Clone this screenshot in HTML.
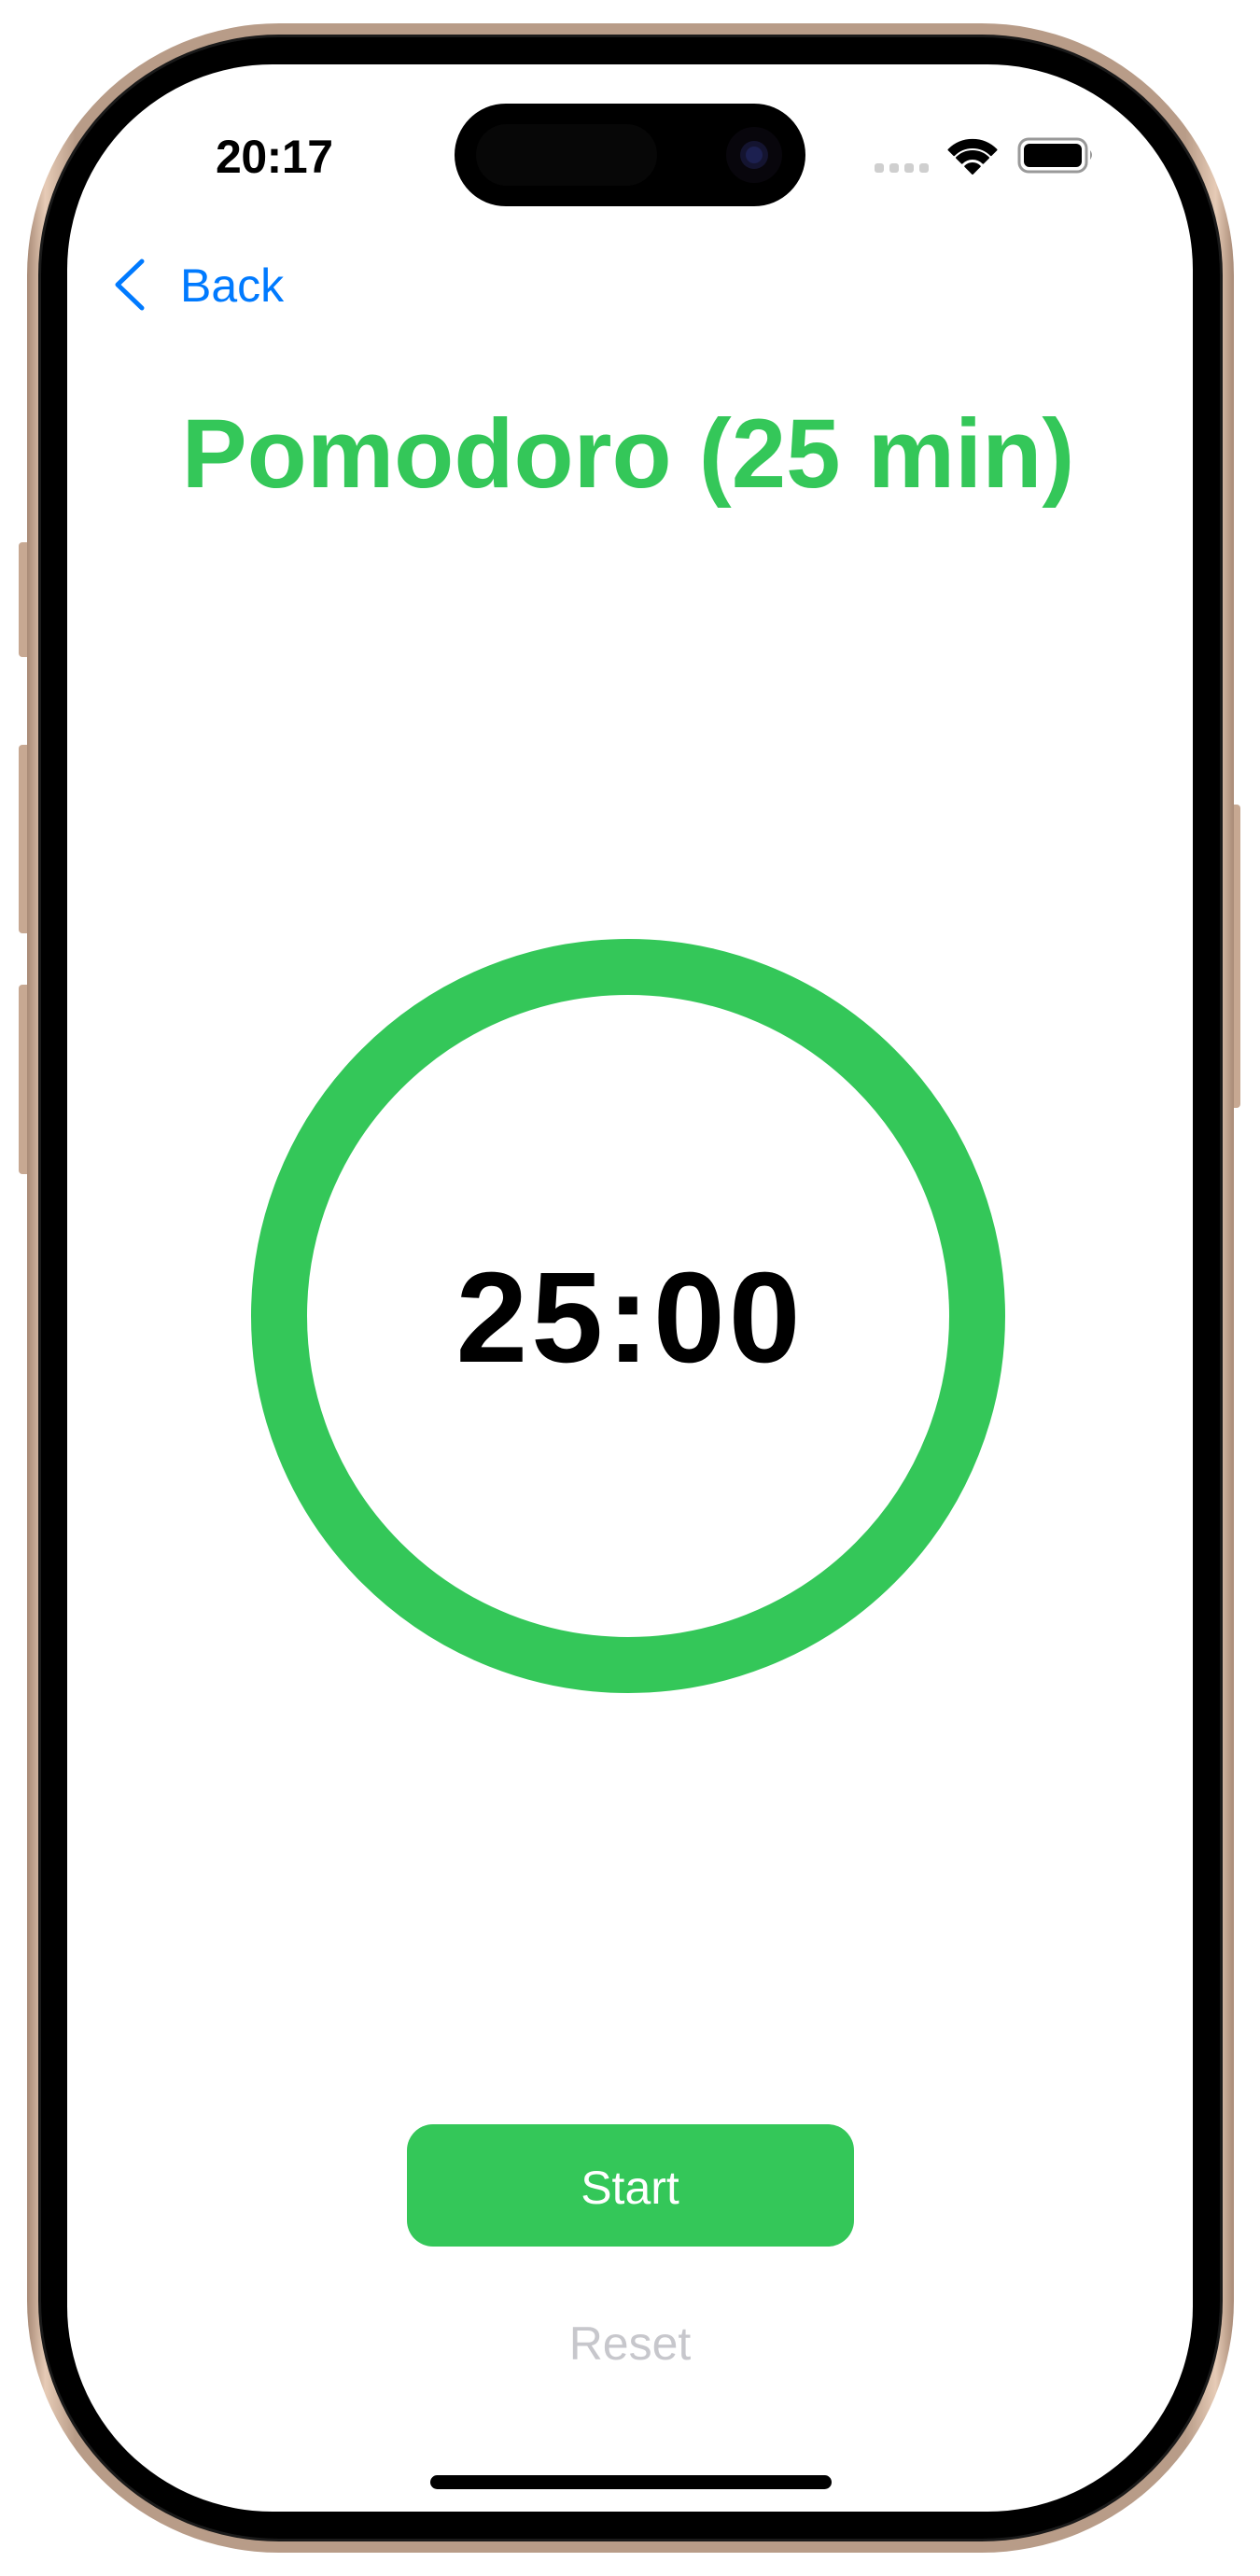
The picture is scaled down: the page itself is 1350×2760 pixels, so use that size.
<!DOCTYPE html>
<html><head><meta charset="utf-8"><style>html,body{margin:0;padding:0;background:#fff;width:1350px;height:2760px;overflow:hidden}svg{display:block}</style></head>
<body>
<svg width="1350" height="2760" viewBox="0 0 1350 2760" xmlns="http://www.w3.org/2000/svg" font-family="Liberation Sans, Arial, sans-serif">
<defs>
<linearGradient id="g" x1="0" y1="0" x2="1" y2="0">
<stop offset="0" stop-color="#a88a76"/><stop offset="0.015" stop-color="#e6cbb6"/><stop offset="0.04" stop-color="#b89c88"/><stop offset="0.96" stop-color="#b89c88"/><stop offset="0.985" stop-color="#e6cbb6"/><stop offset="1" stop-color="#a88a76"/>
</linearGradient>
</defs>
<rect x="20" y="581" width="14" height="123" rx="4" fill="#c7a892"/>
<rect x="20" y="798" width="14" height="202" rx="4" fill="#c7a892"/>
<rect x="20" y="1055" width="14" height="203" rx="4" fill="#c7a892"/>
<rect x="1316" y="862" width="13" height="325" rx="4" fill="#c7a892"/>
<rect x="29" y="25" width="1293" height="2710" rx="270" fill="url(#g)"/>
<rect x="41" y="37" width="1269" height="2686" rx="258" fill="#1a1a1a"/>
<rect x="44" y="40" width="1263" height="2680" rx="255" fill="#000"/>
<rect x="72" y="69" width="1206" height="2622" rx="220" fill="#fff"/>
<rect x="487" y="111" width="376" height="110" rx="55" fill="#000"/>
<rect x="510" y="133" width="194" height="66" rx="33" fill="#070707"/>
<circle cx="808" cy="166" r="30" fill="#08060c"/>
<circle cx="808" cy="166" r="15" fill="#141430"/>
<circle cx="808" cy="166" r="9" fill="#1c2050"/>
<text x="231" y="185" font-size="50" font-weight="bold" fill="#000" textLength="126">20:17</text>
<rect x="937" y="175" width="10" height="10" rx="3" fill="#cfcfcf"/>
<rect x="953" y="175" width="10" height="10" rx="3" fill="#cfcfcf"/>
<rect x="969" y="175" width="10" height="10" rx="3" fill="#cfcfcf"/>
<rect x="985" y="175" width="10" height="10" rx="3" fill="#cfcfcf"/>
<path d="M1016.5 160.5 A36 36 0 0 1 1067.5 160.5 L1061.8 166.2 A28 28 0 0 0 1022.2 166.2 Z" fill="#000" stroke="#000" stroke-width="2" stroke-linejoin="round"/>
<path d="M1025 169 A24 24 0 0 1 1059 169 L1053.3 174.7 A16 16 0 0 0 1030.7 174.7 Z" fill="#000" stroke="#000" stroke-width="2" stroke-linejoin="round"/>
<path d="M1034.2 178.2 A11 11 0 0 1 1049.8 178.2 L1042 186 Z" fill="#000" stroke="#000" stroke-width="2" stroke-linejoin="round"/>
<rect x="1092" y="149" width="72" height="35" rx="10" fill="none" stroke="#999" stroke-width="3"/>
<rect x="1097" y="154" width="62" height="25" rx="6" fill="#000"/>
<path d="M1168 161 Q1172 166 1168 171 Z" fill="#999"/>
<polyline points="152,280 126,305 152,330" fill="none" stroke="#007aff" stroke-width="5" stroke-linecap="round" stroke-linejoin="round"/>
<text x="193" y="323" font-size="50" fill="#007aff">Back</text>
<text x="673" y="522" font-size="105" font-weight="bold" fill="#34c759" text-anchor="middle">Pomodoro (25 min)</text>
<circle cx="673" cy="1410" r="374" fill="none" stroke="#34c759" stroke-width="60"/>
<text x="673" y="1459" font-size="138" font-weight="bold" fill="#000" text-anchor="middle" textLength="369">25:00</text>
<rect x="436" y="2276" width="479" height="131" rx="28" fill="#34c759"/>
<text x="675" y="2361" font-size="50" fill="#fff" text-anchor="middle">Start</text>
<text x="675" y="2528" font-size="50" fill="#c7c7cc" text-anchor="middle">Reset</text>
<rect x="461" y="2652" width="430" height="15" rx="7.5" fill="#000"/>
</svg>
</body></html>
